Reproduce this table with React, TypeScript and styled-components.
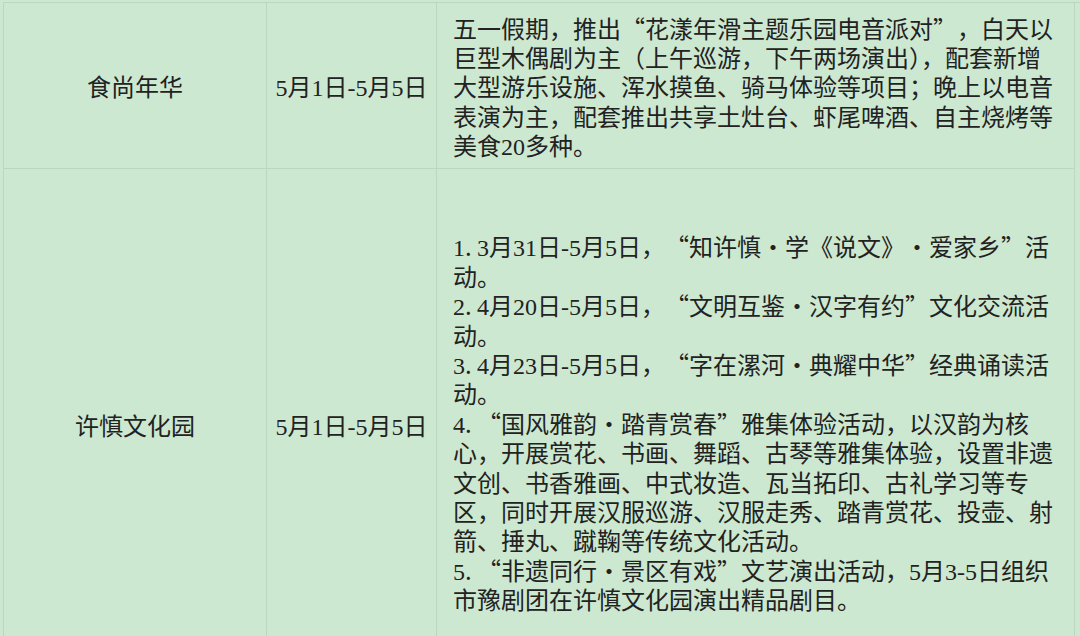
import { Fragment } from 'react'
import styled, { createGlobalStyle } from 'styled-components'

const GlobalStyle = createGlobalStyle`
  html, body {
    margin: 0;
    padding: 0;
    background: #cde8d0;
    overflow: hidden;
  }
`

const Page = styled.div`
  width: 1080px;
  height: 636px;
  overflow: hidden;
  padding: 2px 0 0 3px;
  box-sizing: border-box;
  background: #cde8d0;
`

const Table = styled.div`
  display: grid;
  grid-template-columns: 263px 170px 638px;
  border-top: 1px solid #bcd7c0;
  border-left: 1px solid #bcd7c0;
  font-family: "Liberation Serif", "Noto Sans CJK SC", serif;
  font-size: 24px;
  color: #222;
`

const Cell = styled.div<{ $height: number; $align?: 'center' | 'left'; $padTop?: number }>`
  height: ${p => p.$height}px;
  box-sizing: border-box;
  border-right: 1px solid #bcd7c0;
  border-bottom: 1px solid #bcd7c0;
  display: flex;
  flex-direction: column;
  justify-content: center;
  align-items: ${p => (p.$align === 'left' ? 'flex-start' : 'center')};
  padding-left: ${p => (p.$align === 'left' ? '16px' : '0')};
  padding-top: ${p => p.$padTop ?? 0}px;
`

const Line = styled.div`
  height: 29.4px;
  line-height: 29.4px;
  white-space: nowrap;
`

// fixed-width punctuation, like the quotes, dots and periods of a Song typeface
const Punct = styled.span<{ $side: 'left' | 'right' | 'center'; $w: number }>`
  display: inline-block;
  width: ${p => p.$w}px;
  text-align: ${p => p.$side};
  font-family: "Noto Sans CJK SC", sans-serif;
  line-height: 1;
`

type Row = {
  name: string
  date: string
  height: number
  padTop: number
  lines: string[]
}

const rows: Row[] = [
  {
    name: '食尚年华',
    date: '5月1日-5月5日',
    height: 166,
    padTop: 7,
    lines: [
      '五一假期，推出“花漾年滑主题乐园电音派对”，白天以',
      '巨型木偶剧为主（上午巡游，下午两场演出），配套新增',
      '大型游乐设施、浑水摸鱼、骑马体验等项目；晚上以电音',
      '表演为主，配套推出共享土灶台、虾尾啤酒、自主烧烤等',
      '美食20多种。',
    ],
  },
  {
    name: '许慎文化园',
    date: '5月1日-5月5日',
    height: 512,
    padTop: 2,
    lines: [
      '1.3月31日-5月5日，“知许慎·学《说文》·爱家乡”活',
      '动。',
      '2.4月20日-5月5日，“文明互鉴·汉字有约”文化交流活',
      '动。',
      '3.4月23日-5月5日，“字在漯河·典耀中华”经典诵读活',
      '动。',
      '4.“国风雅韵·踏青赏春”雅集体验活动，以汉韵为核',
      '心，开展赏花、书画、舞蹈、古琴等雅集体验，设置非遗',
      '文创、书香雅画、中式妆造、瓦当拓印、古礼学习等专',
      '区，同时开展汉服巡游、汉服走秀、踏青赏花、投壶、射',
      '箭、捶丸、蹴鞠等传统文化活动。',
      '5.“非遗同行·景区有戏”文艺演出活动，5月3-5日组织',
      '市豫剧团在许慎文化园演出精品剧目。',
    ],
  },
]

const punctStyle: Record<string, { side: 'left' | 'right' | 'center'; w: number }> = {
  '“': { side: 'right', w: 24 },
  '”': { side: 'left', w: 24 },
  '·': { side: 'center', w: 24 },
  '.': { side: 'left', w: 12 },
}

function renderLine(text: string) {
  return text.split(/([“”·.])/).map((part, i) => {
    const s = punctStyle[part]
    return s ? (
      <Punct key={i} $side={s.side} $w={s.w}>{part}</Punct>
    ) : (
      part
    )
  })
}

export default function App() {
  return (
    <Page lang="zh-CN">
      <GlobalStyle />
      <Table>
        {rows.map(row => (
          <Fragment key={row.name}>
            <Cell $height={row.height}>{row.name}</Cell>
            <Cell $height={row.height}>{row.date}</Cell>
            <Cell $height={row.height} $align="left" $padTop={row.padTop}>
              {row.lines.map((l, i) => (
                <Line key={i}>{renderLine(l)}</Line>
              ))}
            </Cell>
          </Fragment>
        ))}
      </Table>
    </Page>
  )
}
